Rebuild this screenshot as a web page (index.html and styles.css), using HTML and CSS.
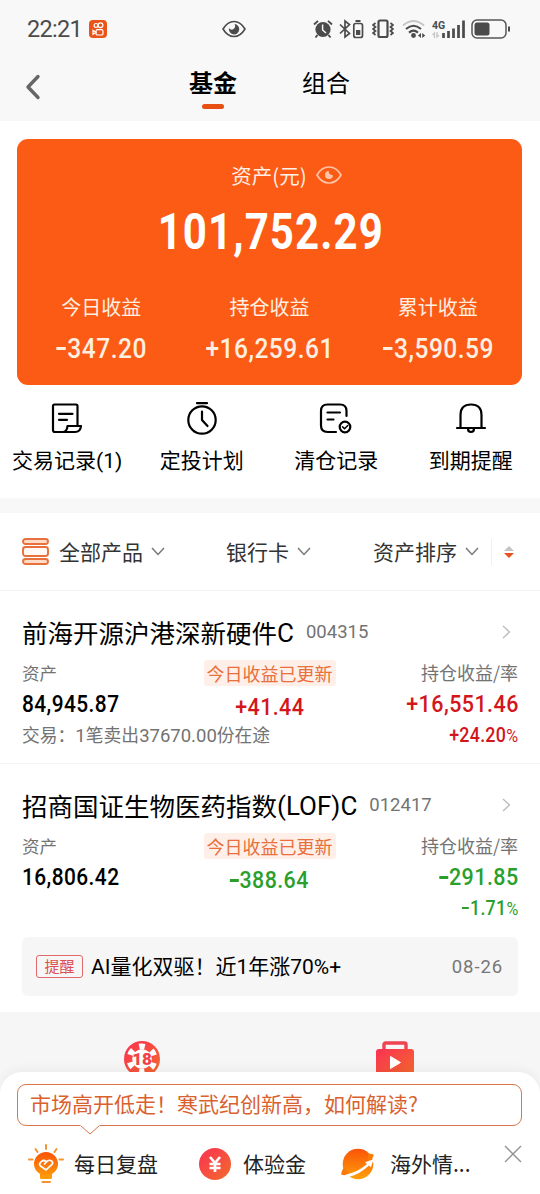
FILE: index.html
```html
<!DOCTYPE html>
<html lang="zh-CN">
<head>
  <meta charset="utf-8">
  <meta name="viewport" content="width=device-width,initial-scale=1.0">
  <title>基金</title>
  <link rel="stylesheet" href="styles.css">
</head>
<body>
<div class="page">
  <header class="header">
    <div class="status">
      <span class="time">22:21</span>
      <svg class="app" width="18" height="18" viewBox="0 0 18 18"><rect width="18" height="18" rx="4" fill="#ea5418"/><g fill="none" stroke="#fff" stroke-width="1.2"><circle cx="7" cy="5.4" r="1.900"/><circle cx="11.500" cy="5.200" r="2.400"/><rect x="7" y="9.600" width="7" height="5.400" rx="1.600"/><path d="M7 12.300L4 10.400v4z"/></g></svg>
      <svg class="watch" width="24" height="18" viewBox="0 0 24 18"><path d="M1 9Q5.500 1.500 12 1.500T23 9Q18.500 16.500 12 16.500T1 9z" fill="none" stroke="#4b4b4b" stroke-width="1.600"/><path d="M12.500 4a5.200 5.200 0 1 1-5.500 4 3 3 0 0 0 4.500 1A3.500 3.500 0 0 0 12.500 4z" fill="#4b4b4b"/></svg>
      <div class="signals">
        <svg width="20" height="20" viewBox="0 0 20 20"><circle cx="10" cy="10.500" r="7.600" fill="#4b4b4b"/><path d="M1 5.500l4-3.600M19 5.500l-4-3.600M4.500 16l-2 2.500M15.500 16l2 2.500" stroke="#4b4b4b" stroke-width="1.900"/><path d="M9.600 5.500V11l3.400 3" fill="none" stroke="#f8f8f8" stroke-width="1.500"/></svg>
        <svg class="bt" width="25" height="20" viewBox="0 0 25 20"><g fill="none" stroke="#4b4b4b" stroke-width="1.700"><path d="M1 5.500l9.500 9L6 18V2l4.500 3.500L1 14.500"/><path d="M16.500 2h5" stroke-width="2"/><rect x="14.800" y="4.500" width="8.700" height="14" rx="2"/></g><rect x="17" y="11" width="4.300" height="5" fill="#4b4b4b"/></svg>
        <svg class="vibrate" width="22" height="20" viewBox="0 0 22 20"><g fill="none" stroke="#4b4b4b"><rect x="6.500" y="1.500" width="9" height="16.500" rx="1.500" stroke-width="2.200"/><path d="M3.500 4L1 6l2.500 2L1 10l2.500 2L1 14l2.500 2M18.500 4L21 6l-2.500 2 2.500 2-2.500 2 2.500 2-2.500 2" stroke-width="1.700"/></g></svg>
        <svg class="wifi" width="24" height="20" viewBox="0 0 24 20"><g fill="none" stroke-width="2.100"><path d="M1 6.500q10.500-9 21 0" stroke="#c6c6c6"/><path d="M4 10q7.500-6.500 15 0M7 13.600q4.500-4 9 0" stroke="#4b4b4b"/></g><circle cx="11.500" cy="16.500" r="2.400" fill="#4b4b4b"/><path d="M19 14v5l-3-2.500zM20.200 14v5l3-2.500z" fill="#4b4b4b"/></svg>
        <svg class="cell" width="34" height="20" viewBox="0 0 34 20"><text x="0" y="9.500" class="net">4G</text><path d="M2.500 19v-5l-2 2M5 13v5l2-2" fill="none" stroke="#c6c6c6" stroke-width="1.300"/><path d="M11.500 19v-5M16.500 19v-7M21.500 19V9.500M26.500 19V6M31.500 19V1.500" stroke="#4b4b4b" stroke-width="2.700"/></svg>
        <svg width="40" height="20" viewBox="0 0 40 20"><rect x="1" y="1" width="34" height="18" rx="5" fill="none" stroke="#555" stroke-width="1.500"/><rect x="3.500" y="3.500" width="15" height="13" rx="2.500" fill="#4b4b4b"/><path d="M38 7.500v5" stroke="#4b4b4b" stroke-width="2"/></svg>
      </div>
    </div>
    <nav class="nav">
      <svg class="back" width="16" height="26" viewBox="0 0 16 26"><path d="M13 2.500L3 13l10 10.500" fill="none" stroke="#666" stroke-width="3.400" stroke-linecap="round" stroke-linejoin="round"/></svg>
      <a class="tab active">基金</a>
      <a class="tab">组合</a>
    </nav>
  </header>

  <section class="summary">
    <div class="total-label">资产(元)
      <svg width="26" height="18" viewBox="0 0 26 18"><path d="M1 9Q5.500 1 13 1t12 8q-4.500 8-12 8T1 9z" fill="none" stroke="#ffc3a8" stroke-width="1.700"/><path d="M13 5a4 4 0 1 0 4 4 2.300 2.300 0 0 1-2.600-.700A2.300 2.300 0 0 1 13 5z" fill="#ffc3a8"/></svg>
    </div>
    <div class="total">101,752.29</div>
    <div class="gains">
      <div class="gain"><span>今日收益</span><b><i class="minus"></i>347.20</b></div>
      <div class="gain"><span>持仓收益</span><b>+16,259.61</b></div>
      <div class="gain"><span>累计收益</span><b><i class="minus"></i>3,590.59</b></div>
    </div>
  </section>

  <section class="actions">
    <a class="action">
      <svg width="34" height="34" viewBox="0 0 34 34"><path d="M27.500 23V4q0-1.500-1.500-1.500H4.500Q3 2.500 3 4v24q0 2 2 2h20q5.500 0 6-6H17.500q-.5 6-5 6M9 11.800h13.500M9 17.800h8" /></svg>
      <span>交易记录<em>(1)</em></span>
    </a>
    <a class="action">
      <svg width="34" height="34" viewBox="0 0 34 34"><circle cx="17" cy="18" r="13.700"/><path d="M12 1.200h10M17 9.500V18l5.500 6"/></svg>
      <span>定投计划</span>
    </a>
    <a class="action">
      <svg width="34" height="34" viewBox="0 0 34 34"><path d="M27.500 14V9q0-6.500-6.500-6.500H8.500Q2 2.500 2 9v14.500Q2 30 8.500 30H17M8.500 10.500H21M8.500 17.500h6"/><circle cx="26" cy="25" r="5.300"/><path d="M23.500 24.800l2 2 3.300-3.300" stroke-width="1.500"/></svg>
      <span>清仓记录</span>
    </a>
    <a class="action">
      <svg width="34" height="34" viewBox="0 0 34 34"><path d="M3 26h28M6.500 26V13q0-10.500 10.500-10.500T27.500 13v13M14 26.500q0 3.500 3 3.500t3-3.500"/></svg>
      <span>到期提醒</span>
    </a>
  </section>

  <section class="filters">
    <svg class="all" width="27" height="27" viewBox="0 0 27 27"><g fill="#ffdcc8" stroke="#e8703c" stroke-width="1.900"><rect x="1" y="1" width="25" height="5" rx="2.500"/><rect x="1" y="9" width="25" height="9" rx="2.500" fill="#fff8f4"/><rect x="1" y="21" width="25" height="5" rx="2.500"/></g></svg>
    <a class="filter product"><span>全部产品</span><svg class="down" width="14" height="9" viewBox="0 0 14 9"><path d="M1 1l6 6.500L13 1"/></svg></a>
    <a class="filter bank"><span>银行卡</span><svg class="down" width="14" height="9" viewBox="0 0 14 9"><path d="M1 1l6 6.500L13 1"/></svg></a>
    <a class="filter order"><span>资产排序</span><svg class="down" width="14" height="9" viewBox="0 0 14 9"><path d="M1 1l6 6.500L13 1"/></svg></a>
    <svg class="sort" width="10" height="12" viewBox="0 0 10 12"><path d="M5 0l5 5H0z" fill="#c4c4c4"/><path d="M5 12l5-5H0z" fill="#e4541c"/></svg>
  </section>

  <section class="fund">
    <h2 class="fund-name">前海开源沪港深新硬件<em>C</em><small>004315</small>
      <svg class="more" width="9" height="14" viewBox="0 0 9 14"><path d="M1 1l6.500 6L1 13"/></svg>
    </h2>
    <div class="fund-data">
      <div class="col">
        <span class="label">资产</span>
        <b class="num">84,945.87</b>
        <span class="trade">交易：<em>1</em>笔卖出<em>37670.00</em>份在途</span>
      </div>
      <div class="col center">
        <span class="badge">今日收益已更新</span>
        <b class="num up">+41.44</b>
      </div>
      <div class="col right">
        <span class="label">持仓收益/率</span>
        <b class="num up">+16,551.46</b>
        <b class="rate up">+24.20<i class="pct">%</i></b>
      </div>
    </div>
  </section>

  <section class="fund">
    <h2 class="fund-name">招商国证生物医药指数<em>(LOF)C</em><small>012417</small>
      <svg class="more" width="9" height="14" viewBox="0 0 9 14"><path d="M1 1l6.500 6L1 13"/></svg>
    </h2>
    <div class="fund-data">
      <div class="col">
        <span class="label">资产</span>
        <b class="num">16,806.42</b>
      </div>
      <div class="col center">
        <span class="badge">今日收益已更新</span>
        <b class="num down-text"><i class="minus"></i>388.64</b>
      </div>
      <div class="col right">
        <span class="label">持仓收益/率</span>
        <b class="num down-text"><i class="minus"></i>291.85</b>
        <b class="rate down-text"><i class="minus"></i>1.71<i class="pct">%</i></b>
      </div>
    </div>
  </section>

  <section class="notice">
    <span class="tag">提醒</span>
    <span class="notice-text"><em>AI</em>量化双驱！近<em>1</em>年涨<em>70%+</em></span>
    <time>08-26</time>
  </section>

  <section class="promo">
    <svg width="36" height="36" viewBox="0 0 36 36">
      <defs><linearGradient id="hot" x1="0" y1="0" x2="1" y2="1"><stop offset="0" stop-color="#fa3153"/><stop offset="1" stop-color="#f36b2b"/></linearGradient></defs>
      <circle cx="18" cy="18" r="18" fill="url(#hot)"/>
      <circle cx="18" cy="18" r="12.500" fill="none" stroke="#fff" stroke-width="6" stroke-dasharray="5.500 7.590" transform="rotate(-102.600 18 18)"/>
      <circle cx="18" cy="18" r="9.800" fill="#fff"/>
      <text x="18" y="24" class="chip">18</text>
    </svg>
    <svg width="38" height="36" viewBox="0 0 38 36"><rect x="8" y="2" width="22" height="12" rx="1.500" fill="none" stroke="#ee4350" stroke-width="3.400"/><rect y="8" width="38" height="28" rx="3" fill="url(#hot)"/><path d="M14.500 15.500v12l10-6z" fill="#fff" stroke="#fff" stroke-linejoin="round"/></svg>
  </section>

  <footer class="sheet">
    <div class="bubble">市场高开低走！寒武纪创新高，如何解读?
      <svg class="tip" width="20" height="11" viewBox="0 0 20 11"><path d="M0 0h20v1.500L10 10 0 1.500z" fill="#fff"/><path d="M.5 1.500L10 10l9.500-8.500" fill="none" stroke="#d8764c"/></svg>
    </div>
    <div class="links">
      <a class="link review">
        <svg width="36" height="40" viewBox="0 0 36 40">
          <defs><linearGradient id="bulb" x1="0" y1="0" x2="0" y2="1"><stop offset="0" stop-color="#fa5308"/><stop offset="1" stop-color="#ffa009"/></linearGradient></defs>
          <path d="M18 8a12 12 0 0 1 12 12q0 6-6 10v4q0 1-1 1H13q-1 0-1-1v-4q-6-4-6-10A12 12 0 0 1 18 8z" fill="url(#bulb)"/>
          <path d="M18 1v4M7.500 5l2 3M28.500 5l-2 3M1 15.500h3.500M31.500 15.500H35M14.500 38h7.500" stroke="#f39332" stroke-width="2" stroke-linecap="round"/>
          <path d="M18 17.500q-2.500-2-4.500 0l-1.500 1.500q-1 1.500.5 3L18 26l6-5.500q1.500-2-.5-3.500t-4 0l-3.500 3.500" fill="none" stroke="#fff" stroke-width="1.700"/>
        </svg>
        <span>每日复盘</span>
      </a>
      <a class="link trial">
        <svg width="32" height="32" viewBox="0 0 32 32"><circle cx="16" cy="16" r="16" fill="url(#hot)"/><path d="M11 9l5 6 5-6M16 15v9M10.500 16h11M10.500 20h11" fill="none" stroke="#fff" stroke-width="2.700"/></svg>
        <span>体验金</span>
      </a>
      <a class="link abroad">
        <svg width="34" height="32" viewBox="0 0 34 32"><circle cx="17" cy="16" r="15.300" fill="url(#bulb)"/><path d="M3 19q-4.500 8-1.500 8 3 .5 7-1zM27 5.500q6 0 5.500 2-1 4-5.500 7z" fill="#fb7a08"/><path d="M5 26.500Q17 24 26 16l-2-1.800 8.500-3-2.500 8-2-1.700Q19 26 8 29z" fill="#fff"/></svg>
        <span>海外情...</span>
      </a>
      <svg class="close" width="18" height="18" viewBox="0 0 18 18"><path d="M1 1l16 16M17 1L1 17" stroke="#929292" stroke-width="1.400"/></svg>
    </div>
  </footer>
</div>
</body>
</html>
```
FILE: styles.css
```css
* {
  box-sizing: border-box;
}

body,
h2 {
  margin: 0;
  padding: 0;
}

body {
  font-family: "Noto Sans CJK SC", sans-serif;
  font-size: 21px;
  color: #000;
  background: #fff;
}

svg {
  display: block;
  flex: none;
}

/* latin letters and digits inside chinese text */
em {
  font-family: Roboto, sans-serif;
  font-style: normal;
  line-height: 1;
}

.page {
  position: relative;
  width: 540px;
  height: 1194px;
  overflow: hidden;
  white-space: nowrap;
}

/* header */
.header {
  height: 121px;
  background: #f8f8f8;
}
.status {
  display: flex;
  align-items: center;
  height: 58px;
  padding-left: 27px;
}
.time {
  width: 62px;
  font: 400 23.500px/28px Roboto, sans-serif;
  letter-spacing: -.7px;
  color: #4b4b4b;
}
.watch {
  margin-left: 115px;
}
.signals {
  display: flex;
  align-items: center;
  margin-left: 67px;
}
.bt {
  margin-left: 6px;
}
.vibrate,
.wifi {
  margin-left: 8px;
}
.cell {
  margin: 0 5px 0 6px;
}
.net {
  font: 700 10.5px Roboto, sans-serif;
  fill: #4b4b4b;
}
.nav {
  display: flex;
  height: 63px;
  padding-left: 25px;
}
.back {
  margin-top: 16px;
}
.tab {
  display: flex;
  flex-direction: column;
  align-items: center;
  margin-left: 65px;
  padding-top: 6px;
  font-size: 24px;
  line-height: 36px;
}
.tab.active {
  margin-left: 148px;
  font-weight: 700;
}
.tab.active::after {
  content: "";
  width: 22px;
  height: 5px;
  margin-top: 4px;
  border-radius: 3px;
  background: #e84f12;
}

/* asset card */
.summary {
  height: 246px;
  margin: 18px 18px 0 17px;
  padding-top: 21px;
  border-radius: 11px;
  background: #fb5b14;
  color: #fff;
}
.total-label {
  display: flex;
  align-items: center;
  justify-content: center;
  gap: 9px;
  width: 361px;
  margin-left: 72px;
  padding-left: 34px;
  font-size: 20.500px;
  line-height: 30px;
  color: #ffefe6;
}
.total {
  height: 56px;
  margin-top: 14px;
  padding-left: 3px;
  text-align: center;
  font: 700 50px/56px Roboto, sans-serif;
  letter-spacing: 1.300px;
  transform: scaleX(.84);
}
.gains {
  display: flex;
  margin-top: 32px;
}
.gain {
  flex: 1;
  display: flex;
  flex-direction: column;
  align-items: center;
  color: #ffefe0;
}
.gain span {
  font-size: 20px;
  line-height: 30px;
}
.gain b {
  margin-top: 13px;
  padding-left: 1px;
  font: 500 28.500px/28px Roboto, sans-serif;
  letter-spacing: .6px;
  transform: scaleX(.86);
}
.minus {
  display: inline-block;
  width: .4em;
  height: .1em;
  margin: 0 .05em .27em 0;
  background: currentColor;
}

/* shortcuts */
.actions {
  display: grid;
  grid-template-columns: repeat(4, 134.500px);
  height: 128px;
  padding-top: 17px;
  border-bottom: 15px solid #f8f8f8;
}
.action {
  display: flex;
  flex-direction: column;
  align-items: center;
  line-height: 30px;
}
.action svg {
  fill: none;
  stroke: #000;
  stroke-width: 2.200;
  stroke-linecap: round;
  stroke-linejoin: round;
}
.action span {
  margin-top: 8px;
}

/* filters */
.filters {
  display: flex;
  align-items: center;
  height: 78px;
  padding-left: 22px;
  border-bottom: 1px solid #f4f4f4;
  color: #333;
}
.filter {
  display: flex;
  align-items: center;
  gap: 8px;
  line-height: 24px;
}
.filter span {
  padding-bottom: 2px;
}
.product {
  margin-left: 10px;
}
.bank {
  margin-left: 61px;
}
.order {
  margin-left: 62px;
  padding-right: 12px;
  border-right: 1px solid #eee;
}
.down {
  fill: none;
  stroke: #777;
  stroke-width: 1.500;
}
.sort {
  margin-left: 12px;
}

/* funds */
.fund {
  height: 173px;
  padding: 22px 22px 0;
  border-bottom: 1px solid #f4f4f4;
}
.fund + .fund {
  border-bottom: 0;
}
.fund-name {
  display: flex;
  align-items: center;
  height: 38px;
  padding-bottom: 1px;
  font-size: 25.500px;
  font-weight: 400;
  line-height: 36px;
}
.fund-name em {
  padding-top: 2px;
  font-size: 26px;
}
.fund-name small {
  margin-left: 12px;
  padding-top: 1px;
  font: 400 18.500px/26px Roboto, sans-serif;
  color: #737373;
}
.more {
  margin: 0 7px 0 auto;
  fill: none;
  stroke: #bbb;
  stroke-width: 1.300;
}
.fund-data {
  display: grid;
  grid-template-columns: 181px 133px 182px;
  padding-top: 9px;
}
.col {
  display: flex;
  flex-direction: column;
  align-items: flex-start;
}
.center {
  align-items: center;
}
.right {
  align-items: flex-end;
}
.label {
  font-size: 17.500px;
  line-height: 26px;
  color: #737373;
}
.right .label {
  font-size: 18px;
  line-height: 25px;
  padding-bottom: 1px;
}
.badge {
  padding: 0 3px;
  border-radius: 3px;
  background: #ffefe9;
  font-size: 18px;
  line-height: 26px;
  color: #e8703c;
}
.num {
  margin-top: 5px;
  font: 500 24px/26px Roboto, sans-serif;
  letter-spacing: .5px;
  transform: scaleX(.87);
  transform-origin: 0 50%;
}
.center .num {
  margin-top: 8px;
  transform: scaleX(.89);
  transform-origin: 50% 50%;
}
.right .num {
  transform: scaleX(.895);
}
.right .num,
.right .rate {
  margin-right: -.4px;
  transform-origin: 100% 50%;
}
.trade {
  margin-top: 4px;
  font-size: 17.800px;
  line-height: 26px;
  color: #737373;
}
.trade em {
  font-size: 18.500px;
}
.rate {
  margin-top: 5px;
  font: 500 21px/26px Roboto, sans-serif;
  letter-spacing: .3px;
  transform: scaleX(.85);
}
.pct {
  font-style: normal;
  font-weight: 400;
  font-size: 19px;
}
.up {
  color: #d3161b;
}
.down-text {
  color: #2b9f2c;
}

/* notice */
.notice {
  display: flex;
  align-items: center;
  height: 59px;
  margin: 0 22px 16px;
  padding: 0 15px 0 14px;
  border-radius: 6px;
  background: #f6f6f6;
}
.tag {
  width: 47px;
  height: 23px;
  border: 1px solid #e0696b;
  border-radius: 3px;
  text-align: center;
  font-size: 15px;
  line-height: 20px;
  color: #d94f52;
}
.notice-text {
  margin-left: 8px;
  padding-bottom: 4px;
}
.notice time {
  margin-left: auto;
  font: 400 18.500px/26px Roboto, sans-serif;
  letter-spacing: .9px;
  color: #777;
}

.promo {
  display: flex;
  justify-content: space-between;
  height: 182px;
  padding: 29px 126px 0 124px;
  background: #f6f6f6;
}
.chip {
  font: 900 17px Roboto, sans-serif;
  text-anchor: middle;
  fill: #ef4348;
}

/* bottom sheet over the page */
.sheet {
  position: absolute;
  left: 0;
  right: 0;
  bottom: 0;
  height: 122px;
  padding: 12px 18px 0 17px;
  border-radius: 22px 22px 0 0;
  background: #fff;
  box-shadow: 0 -4px 10px rgba(0, 0, 0, .04);
}
.bubble {
  position: relative;
  height: 42px;
  padding-left: 12px;
  border: 1px solid #d8764c;
  border-radius: 9px;
  line-height: 37px;
  color: #d9612f;
}
.tip {
  position: absolute;
  left: 62px;
  top: 39px;
}
.links {
  display: flex;
  align-items: center;
  height: 40px;
  margin-top: 18px;
  padding-left: 11px;
  color: #222;
}
.link {
  display: flex;
  align-items: center;
}
.link span {
  padding-bottom: 2px;
}
.review {
  gap: 10px;
}
.trial {
  gap: 12px;
  margin-left: 41px;
}
.abroad {
  gap: 15px;
  margin-left: 35px;
}
.close {
  margin: 0 0 20px auto;
}
```
